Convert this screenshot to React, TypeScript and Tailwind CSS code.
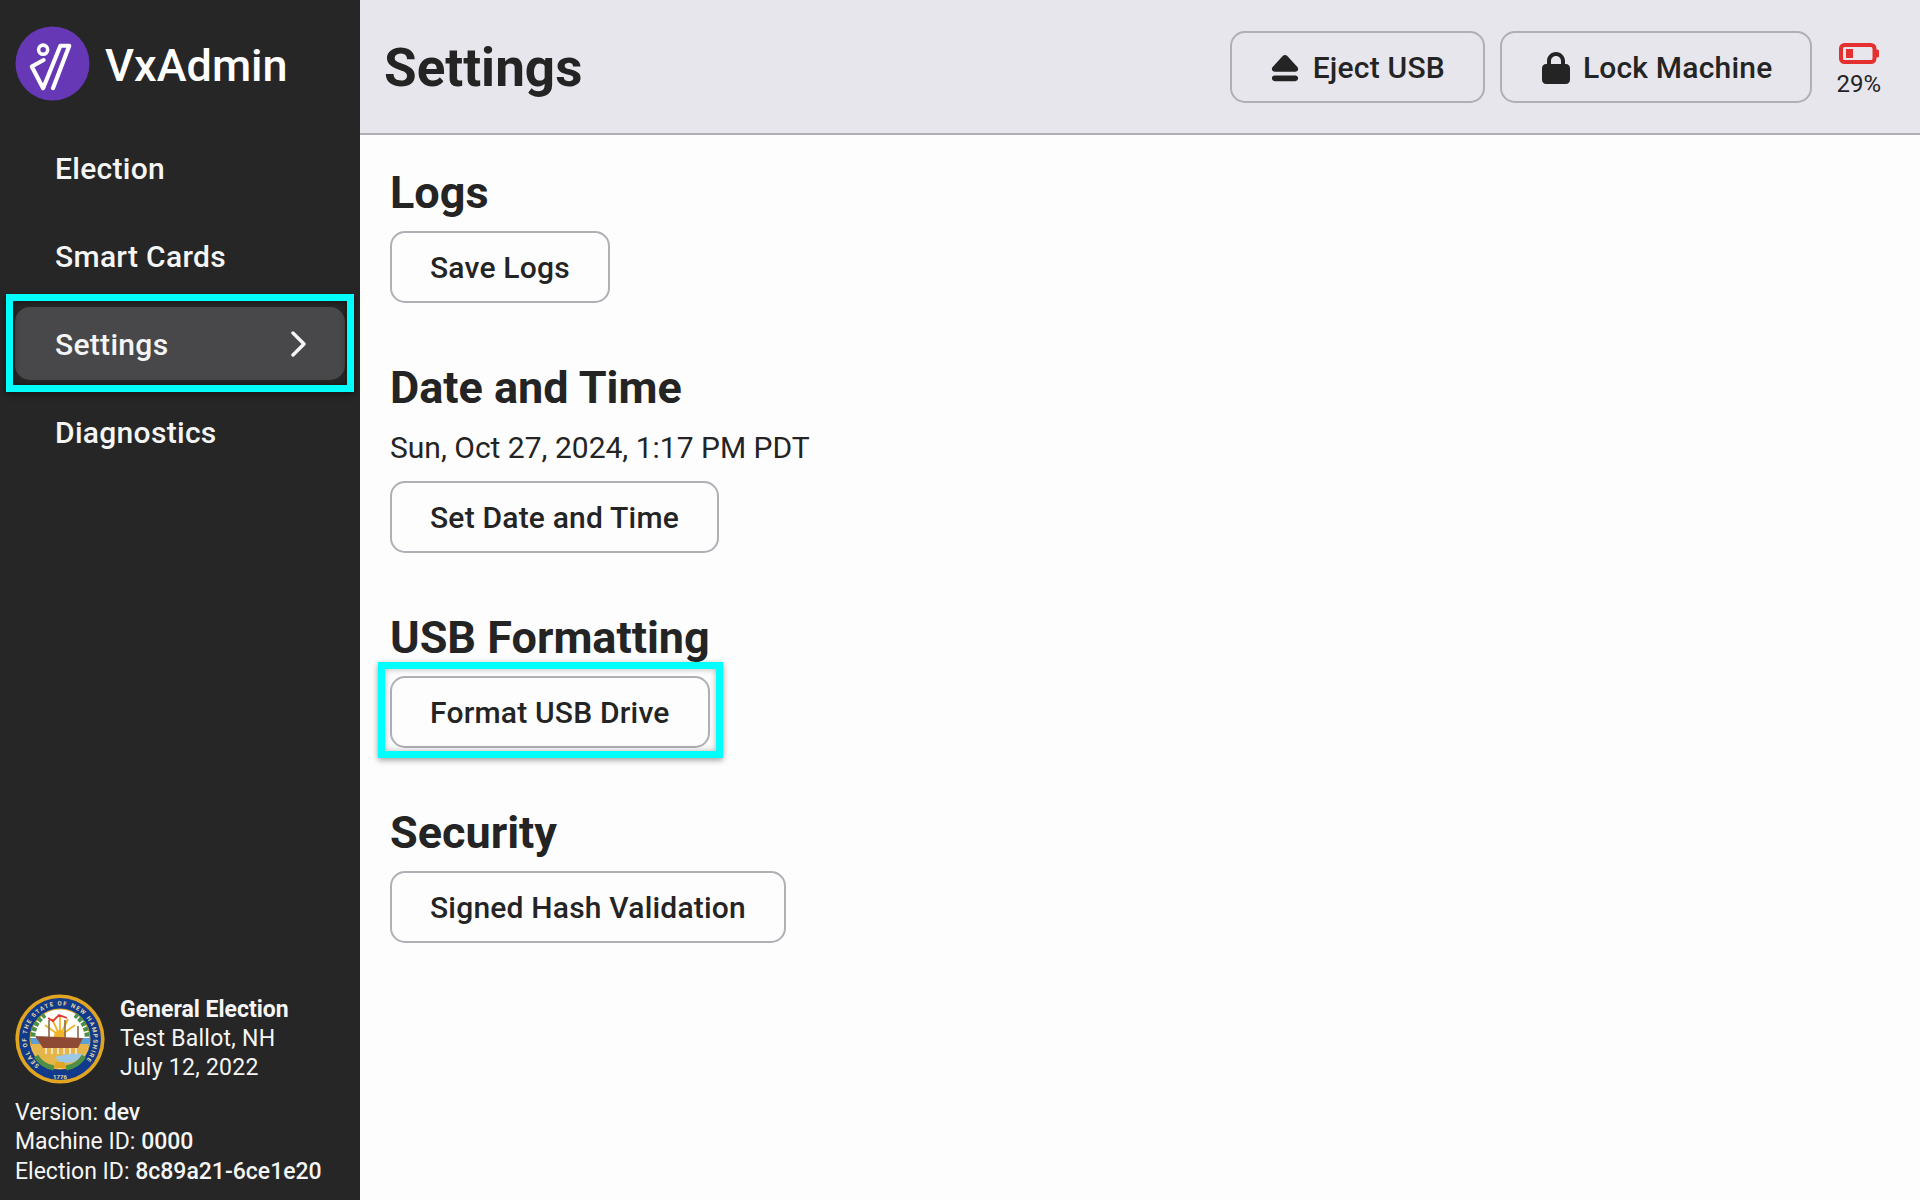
import React from "react";
import { FaEject, FaLock } from "react-icons/fa6";

const NAV = ["Election", "Smart Cards", "Settings", "Diagnostics"];

const Logo = () => (
  <svg viewBox="0 0 76 76" className="-mt-[1px] h-[75px] w-[75px] shrink-0">
    <circle cx="38" cy="38" r="37.5" fill="#6638b6" />
    <g fill="none" stroke="#fff" strokeLinecap="round" strokeLinejoin="round">
      <circle cx="28.5" cy="24" r="4.6" strokeWidth="3.6" />
      <path d="M29 34.5 L17 41 L28.5 63 L46 20 L55 20 L38.5 63" strokeWidth="4.2" />
    </g>
  </svg>
);

const Seal = () => (
  <svg viewBox="0 0 90 90" className="h-[90px] w-[90px] shrink-0">
    <defs>
      <path id="seal-ring" d="M25.8 72.4 A33.5 33.5 0 1 1 64.2 72.4" />
    </defs>
    <circle cx="45" cy="45" r="44.6" fill="#e2a521" />
    <circle cx="45" cy="45" r="41" fill="#123a8c" />
    <circle cx="45" cy="45" r="30.5" fill="#e2a521" />
    <circle cx="45" cy="45" r="29.5" fill="#ffffff" />
    <text fontSize="6" fontWeight="700" fill="#e8d9a0" fontFamily="Roboto, sans-serif">
      <textPath href="#seal-ring" startOffset="1%" textLength="158">
        SEAL OF THE STATE OF NEW HAMPSHIRE
      </textPath>
    </text>
    <text x="45" y="85" textAnchor="middle" fontSize="6" fontWeight="700" fill="#e8d9a0" fontFamily="Roboto, sans-serif">
      1776
    </text>
    <path d="M45 42 L45 22 M45 42 L37 25 M45 42 L53 25 M45 42 L30 31 M45 42 L60 31" stroke="#f0b429" strokeWidth="1.8" />
    <circle cx="45" cy="42" r="6" fill="#f0b429" />
    <path d="M18 48 a28 28 0 0 1 12 -27 M72 48 a28 28 0 0 0 -12 -27" fill="none" stroke="#4d8f46" strokeWidth="5" strokeDasharray="4 1.5" />
    <path d="M16 44 H74 V52 H16 Z" fill="#5aa0d6" />
    <path d="M16 50 H74 A29.5 29.5 0 0 1 16 50 Z" fill="#e5b44a" />
    <path d="M40 63 Q54 58 68 60 Q60 72 44 68 Z" fill="#9ec9e6" />
    <path d="M20 42 L68 44 L63 54 L28 54 Z" fill="#8f4a36" />
    <path d="M31 54 V60 M37 54 V60 M43 54 V60 M49 54 V60 M55 54 V60 M61 54 V60" stroke="#fff" strokeWidth="1.2" />
    <path d="M34 43 V26 M50 43 V26 M63 44 V32" stroke="#8b6a4a" strokeWidth="1.6" />
    <path d="M33 24 L38 27 L44 21 L52 24" fill="none" stroke="#d33" strokeWidth="1.8" />
    <path d="M21 62 q6 10 18 12 M69 62 q-6 10 -18 12" fill="none" stroke="#4d8f46" strokeWidth="5" />
    <path d="M41 68 H49 L51 74 H39 Z" fill="#e2a521" />
  </svg>
);

const Battery = () => (
  <svg viewBox="0 0 40 21" className="h-[21px] w-[40px]">
    <rect x="2" y="2" width="33.5" height="17" rx="3.5" fill="none" stroke="#e53030" strokeWidth="4" />
    <rect x="7" y="6" width="7" height="9" fill="#e53030" />
    <rect x="36.5" y="6.5" width="3.5" height="8" rx="1.5" fill="#e53030" />
  </svg>
);

const Btn = ({ children, gap = "gap-[13px]" }: { children: React.ReactNode; gap?: string }) => (
  <button className={`flex h-[72px] items-center justify-center rounded-[15px] border-2 border-[#b0afb5] px-[38px] pt-[2px] text-[30px] font-medium leading-none tracking-[0.2px] text-[#242424] ${gap}`}>
    {children}
  </button>
);

const Section = ({ title, children }: { title: string; children: React.ReactNode }) => (
  <section className="mb-[59px] flex flex-col items-start">
    <h2 className="mb-[13px] pt-[1px] text-[45px] font-bold leading-[50px] text-[#242424]">{title}</h2>
    {children}
  </section>
);

export default function App() {
  return (
    <div className="flex h-[1200px] w-[1920px] overflow-hidden bg-[#fdfdfd] font-['Roboto',sans-serif] text-[#242424]">
      <aside className="flex w-[360px] shrink-0 flex-col bg-[#262626] text-[#f5f5f5]">
        <div className="flex h-[128px] items-center gap-[15px] pl-[15px]">
          <Logo />
          <span className="pt-[2px] text-[45px] font-medium leading-none text-white">VxAdmin</span>
        </div>
        <nav className="flex flex-col gap-[15px] px-[15px] pt-[3px]">
          {NAV.map((item) => {
            const active = item === "Settings";
            return (
              <div key={item} className="relative">
                <div className={`flex h-[73px] items-center justify-between rounded-[15px] pl-[40px] pr-[39px] pt-[2px] text-[30px] font-medium tracking-[0.3px] ${active ? "bg-[#48484a]" : ""}`}>
                  <span>{item}</span>
                  {active && (
                    <svg viewBox="0 0 15 26" className="-mt-[2px] h-[26px] w-[15px]" fill="none" stroke="#f5f5f5" strokeWidth="3.4" strokeLinecap="round" strokeLinejoin="round">
                      <path d="M2 2 L13 13 L2 24" />
                    </svg>
                  )}
                </div>
                {active && (
                  <div className="absolute -bottom-[12px] -left-[9px] -right-[9px] -top-[13px] border-[7px] border-[#00ffff] shadow-[0_2px_6px_rgba(0,0,0,0.5),inset_0_0_6px_rgba(0,0,0,0.5)]" />
                )}
              </div>
            );
          })}
        </nav>
        <div className="mt-auto px-[15px] pb-[14px] text-[23px] leading-[29.4px]">
          <div className="mb-[14px] flex items-center gap-[15px]">
            <Seal />
            <div className="leading-[29px]">
              <div className="font-bold">General Election</div>
              <div className="tracking-[0.25px]">Test Ballot, NH</div>
              <div className="tracking-[0.25px]">July 12, 2022</div>
            </div>
          </div>
          <div>Version: <span className="font-medium">dev</span></div>
          <div>Machine ID: <span className="font-medium">0000</span></div>
          <div>Election ID: <span className="font-medium">8c89a21-6ce1e20</span></div>
        </div>
      </aside>
      <div className="flex min-w-0 flex-1 flex-col">
        <header className="flex h-[135px] items-center justify-between border-b-2 border-[#b0afb5] bg-[#e7e6ec] pl-[24px] pr-[39px]">
          <h1 className="pt-[4px] text-[53px] font-bold leading-none">Settings</h1>
          <div className="flex items-center gap-[15px]">
            <Btn><FaEject className="text-[30px]" />Eject USB</Btn>
            <Btn gap="gap-[11px]"><FaLock className="text-[32px]" />Lock Machine</Btn>
            <div className="ml-[9px] flex flex-col items-center pt-[6px] text-[24px] leading-none">
              <Battery />
              <span className="mt-[8px]">29%</span>
            </div>
          </div>
        </header>
        <main className="flex-1 px-[30px] pt-[32px]">
          <Section title="Logs"><Btn>Save Logs</Btn></Section>
          <Section title="Date and Time">
            <p className="mb-[13px] pt-[1px] text-[30px] leading-[41px]">Sun, Oct 27, 2024, 1:17 PM PDT</p>
            <Btn>Set Date and Time</Btn>
          </Section>
          <Section title="USB Formatting">
            <div className="relative">
              <Btn>Format USB Drive</Btn>
              <div className="absolute -bottom-[10px] -left-[12px] -right-[13px] -top-[14px] border-[7px] border-[#00ffff] shadow-[0_2px_6px_rgba(0,0,0,0.4),inset_0_0_6px_rgba(0,0,0,0.3)]" />
            </div>
          </Section>
          <Section title="Security"><Btn>Signed Hash Validation</Btn></Section>
        </main>
      </div>
    </div>
  );
}
